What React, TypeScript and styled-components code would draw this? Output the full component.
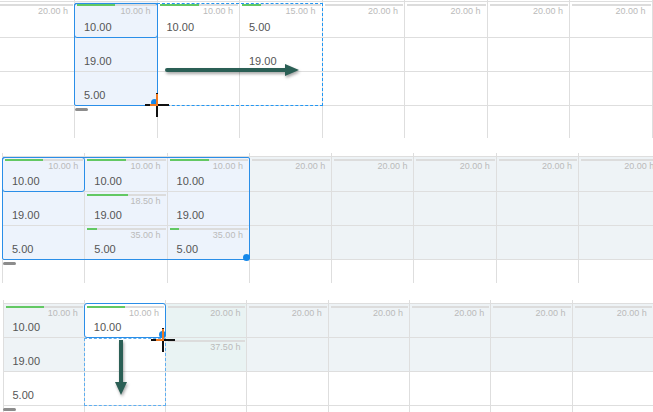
import React from "react";
import styled, { createGlobalStyle } from "styled-components";

type Tone = "white" | "sel" | "grey" | "teal";
type CellData = { tone: Tone; bar?: number; label?: string; value?: string };

const toneColor: Record<Tone, string> = {
  white: "#ffffff",
  sel: "#edf3fc",
  grey: "#eef3f6",
  teal: "#e9f3f3",
};

const GlobalStyle = createGlobalStyle`
  html, body {
    margin: 0;
    padding: 0;
    background: #fff;
  }
  body {
    width: 653px;
    height: 412px;
    overflow: hidden;
    font-family: "Liberation Sans", Arial, sans-serif;
  }
`;

const Page = styled.div`
  display: flex;
  flex-direction: column;
  width: 653px;
`;

const Panel = styled.div<{ $height: number; $gap: number }>`
  position: relative;
  height: ${(p) => p.$height}px;
  margin-top: ${(p) => p.$gap}px;
  overflow: hidden;
`;

const Columns = styled.div<{ $offset: number }>`
  display: flex;
  height: 100%;
  margin-left: ${(p) => p.$offset}px;
`;

const Column = styled.div<{ $width: number }>`
  flex: 0 0 ${(p) => p.$width}px;
  display: flex;
  flex-direction: column;
  box-sizing: border-box;
  border-left: 1px solid #dedede;
`;

const Stub = styled.div<{ $height: number }>`
  flex: 0 0 ${(p) => p.$height}px;
`;

const Cell = styled.div<{ $tone: Tone; $height: number }>`
  flex: 0 0 ${(p) => p.$height}px;
  box-sizing: border-box;
  display: flex;
  flex-direction: column;
  border-top: 1px solid #dedede;
  background: ${(p) => toneColor[p.$tone]};
`;

const Tail = styled.div`
  flex: 1;
  border-top: 1px solid #dedede;
`;

const Bar = styled.div`
  height: 2px;
  margin: 2px 1px 0 2px;
  background: #dcdcdc;
`;

const BarSpace = styled.div`
  height: 4px;
`;

const BarFill = styled.div<{ $pct: number }>`
  width: ${(p) => p.$pct}%;
  height: 100%;
  background: #63c863;
`;

const Hours = styled.div`
  height: 10px;
  padding-right: 6px;
  font-size: 9px;
  line-height: 10px;
  color: #bababa;
  text-align: right;
  white-space: nowrap;
`;

const Amount = styled.div`
  margin-top: auto;
  padding: 0 0 3px 9px;
  font-size: 11px;
  line-height: 14px;
  color: #555;
`;

type Box = { $x: number; $y: number; $w: number; $h: number };

const CellOutline = styled.div<Box>`
  position: absolute;
  left: ${(p) => p.$x}px;
  top: ${(p) => p.$y}px;
  width: ${(p) => p.$w}px;
  height: ${(p) => p.$h}px;
  box-sizing: border-box;
  border: 1px solid #2a8ee8;
  border-radius: 3px;
`;

const RangeOutline = styled(CellOutline)`
  border-radius: 2px;
`;

const FillPreview = styled.div<Box & { $light?: boolean }>`
  position: absolute;
  left: ${(p) => p.$x}px;
  top: ${(p) => p.$y}px;
  width: ${(p) => p.$w}px;
  height: ${(p) => p.$h}px;
  box-sizing: border-box;
  border: 1px dashed ${(p) => (p.$light ? "#5eaef0" : "#2196f3")};
`;

const Grip = styled.div<{ $x: number; $y: number }>`
  position: absolute;
  left: ${(p) => p.$x}px;
  top: ${(p) => p.$y}px;
  width: 13px;
  height: 3px;
  border-radius: 2px;
  background: #8c8c8c;
`;

const Dot = styled.div<{ $x: number; $y: number }>`
  position: absolute;
  left: ${(p) => p.$x - 3.5}px;
  top: ${(p) => p.$y - 3.5}px;
  width: 7px;
  height: 7px;
  border-radius: 50%;
  background: #1487ea;
`;

const Drawing = styled.svg<{ $x: number; $y: number }>`
  position: absolute;
  left: ${(p) => p.$x}px;
  top: ${(p) => p.$y}px;
  overflow: visible;
`;

const ArrowDrawing = styled(Drawing)`
  filter: drop-shadow(1px 2px 1.5px rgba(0, 0, 0, 0.35));
`;

const ARROW = "#2b5f55";

const ArrowRight = ({ x, y }: { x: number; y: number }) => (
  <ArrowDrawing $x={x} $y={y} width="140" height="20" viewBox="0 0 140 20">
    <line x1="4" y1="8" x2="124" y2="8" stroke={ARROW} strokeWidth="4" strokeLinecap="round" />
    <polygon points="122,2 136,8 122,14" fill={ARROW} />
  </ArrowDrawing>
);

const ArrowDown = ({ x, y }: { x: number; y: number }) => (
  <ArrowDrawing $x={x} $y={y} width="20" height="62" viewBox="0 0 20 62">
    <line x1="10" y1="2" x2="10" y2="46" stroke={ARROW} strokeWidth="4" />
    <polygon points="4,44 10,57 16,44" fill={ARROW} />
  </ArrowDrawing>
);

const Crosshair = ({ x, y }: { x: number; y: number }) => (
  <Drawing $x={x - 13} $y={y - 13} width="26" height="26" viewBox="0 0 26 26">
    <line x1="1" y1="13" x2="25" y2="13" stroke="#111" strokeWidth="2" />
    <line x1="13" y1="1" x2="13" y2="25" stroke="#111" strokeWidth="2" />
    <line x1="13" y1="2" x2="13" y2="14" stroke="#f07a22" strokeWidth="2" />
    <line x1="6" y1="13" x2="14" y2="13" stroke="#f07a22" strokeWidth="2" />
  </Drawing>
);

type Layout = {
  offset: number;
  width: number;
  stub: number;
  rows: number[];
  height: number;
  gap: number;
};

const GridPanel = ({
  layout,
  columns,
  children,
}: {
  layout: Layout;
  columns: CellData[][];
  children?: React.ReactNode;
}) => (
  <Panel $height={layout.height} $gap={layout.gap}>
    <Columns $offset={layout.offset}>
      {columns.map((col, ci) => (
        <Column key={ci} $width={layout.width}>
          <Stub $height={layout.stub} />
          {col.map((cell, ri) => (
            <Cell key={ri} $tone={cell.tone} $height={layout.rows[ri]}>
              {cell.bar !== undefined ? (
                <Bar>
                  <BarFill $pct={cell.bar} />
                </Bar>
              ) : (
                <BarSpace />
              )}
              <Hours>{cell.label}</Hours>
              {cell.value && <Amount>{cell.value}</Amount>}
            </Cell>
          ))}
          <Tail />
        </Column>
      ))}
    </Columns>
    {children}
  </Panel>
);

const w = (tone: Tone): CellData => ({ tone });
const v = (tone: Tone, value: string): CellData => ({ tone, value });
const cap = (tone: Tone, label = "20.00 h"): CellData => ({ tone, bar: 0, label });
const full = (tone: Tone, bar: number, label: string, value: string): CellData => ({
  tone,
  bar,
  label,
  value,
});

const repeat = (n: number, col: CellData[]) => Array.from({ length: n }, () => col);

const firstColumns: CellData[][] = [
  [cap("white"), w("white"), w("white")],
  [full("sel", 49, "10.00 h", "10.00"), v("sel", "19.00"), v("sel", "5.00")],
  [full("white", 50, "10.00 h", "10.00"), w("white"), w("white")],
  [full("white", 24, "15.00 h", "5.00"), v("white", "19.00"), w("white")],
  ...repeat(4, [cap("white"), w("white"), w("white")]),
  [w("white"), w("white"), w("white")],
];

const secondColumns: CellData[][] = [
  [full("sel", 49, "10.00 h", "10.00"), v("sel", "19.00"), v("sel", "5.00")],
  [
    full("sel", 50, "10.00 h", "10.00"),
    full("sel", 52, "18.50 h", "19.00"),
    full("sel", 13, "35.00 h", "5.00"),
  ],
  [full("sel", 50, "10.00 h", "10.00"), v("sel", "19.00"), full("sel", 12, "35.00 h", "5.00")],
  ...repeat(5, [cap("grey"), w("grey"), w("grey")]),
];

const thirdColumns: CellData[][] = [
  [full("grey", 50, "10.00 h", "10.00"), v("grey", "19.00"), v("white", "5.00")],
  [full("white", 50, "10.00 h", "10.00"), w("white"), w("white")],
  [cap("teal"), cap("teal", "37.50 h"), w("white")],
  ...repeat(5, [cap("grey"), w("grey"), w("white")]),
];

const first: Layout = { offset: -8.5, width: 82.5, stub: 1, rows: [36, 34, 34], height: 138, gap: 0 };
const second: Layout = { offset: 2, width: 82.3, stub: 3, rows: [35, 34, 34], height: 130, gap: 15 };
const third: Layout = { offset: 2.5, width: 81.3, stub: 3, rows: [34, 34, 34], height: 112, gap: 17 };

const colX = (l: Layout, i: number) => l.offset + i * l.width;

export default function App() {
  return (
    <Page>
      <GlobalStyle />

      <GridPanel layout={first} columns={firstColumns}>
        <FillPreview $x={colX(first, 2)} $y={3} $w={first.width * 2 + 1} $h={103} />
        <RangeOutline $x={colX(first, 1)} $y={3} $w={first.width + 1} $h={103} />
        <CellOutline $x={colX(first, 1)} $y={3} $w={first.width + 1} $h={35} />
        <Grip $x={75} $y={108} />
        <ArrowRight x={163} y={62} />
        <Dot $x={154} $y={102} />
        <Crosshair x={157} y={105} />
      </GridPanel>

      <GridPanel layout={second} columns={secondColumns}>
        <RangeOutline $x={colX(second, 0)} $y={4} $w={second.width * 3 + 1} $h={103} />
        <CellOutline $x={colX(second, 0)} $y={4} $w={second.width + 1} $h={35} />
        <Dot $x={246.5} $y={104} />
        <Grip $x={3} $y={109} />
      </GridPanel>

      <GridPanel layout={third} columns={thirdColumns}>
        <CellOutline $x={colX(third, 1)} $y={3} $w={third.width + 1} $h={35} />
        <FillPreview $light $x={colX(third, 1)} $y={38} $w={third.width + 1} $h={68} />
        <ArrowDown x={111} y={38} />
        <Grip $x={3} $y={108} />
        <Dot $x={162.5} $y={34} />
        <Crosshair x={163} y={40} />
      </GridPanel>
    </Page>
  );
}
